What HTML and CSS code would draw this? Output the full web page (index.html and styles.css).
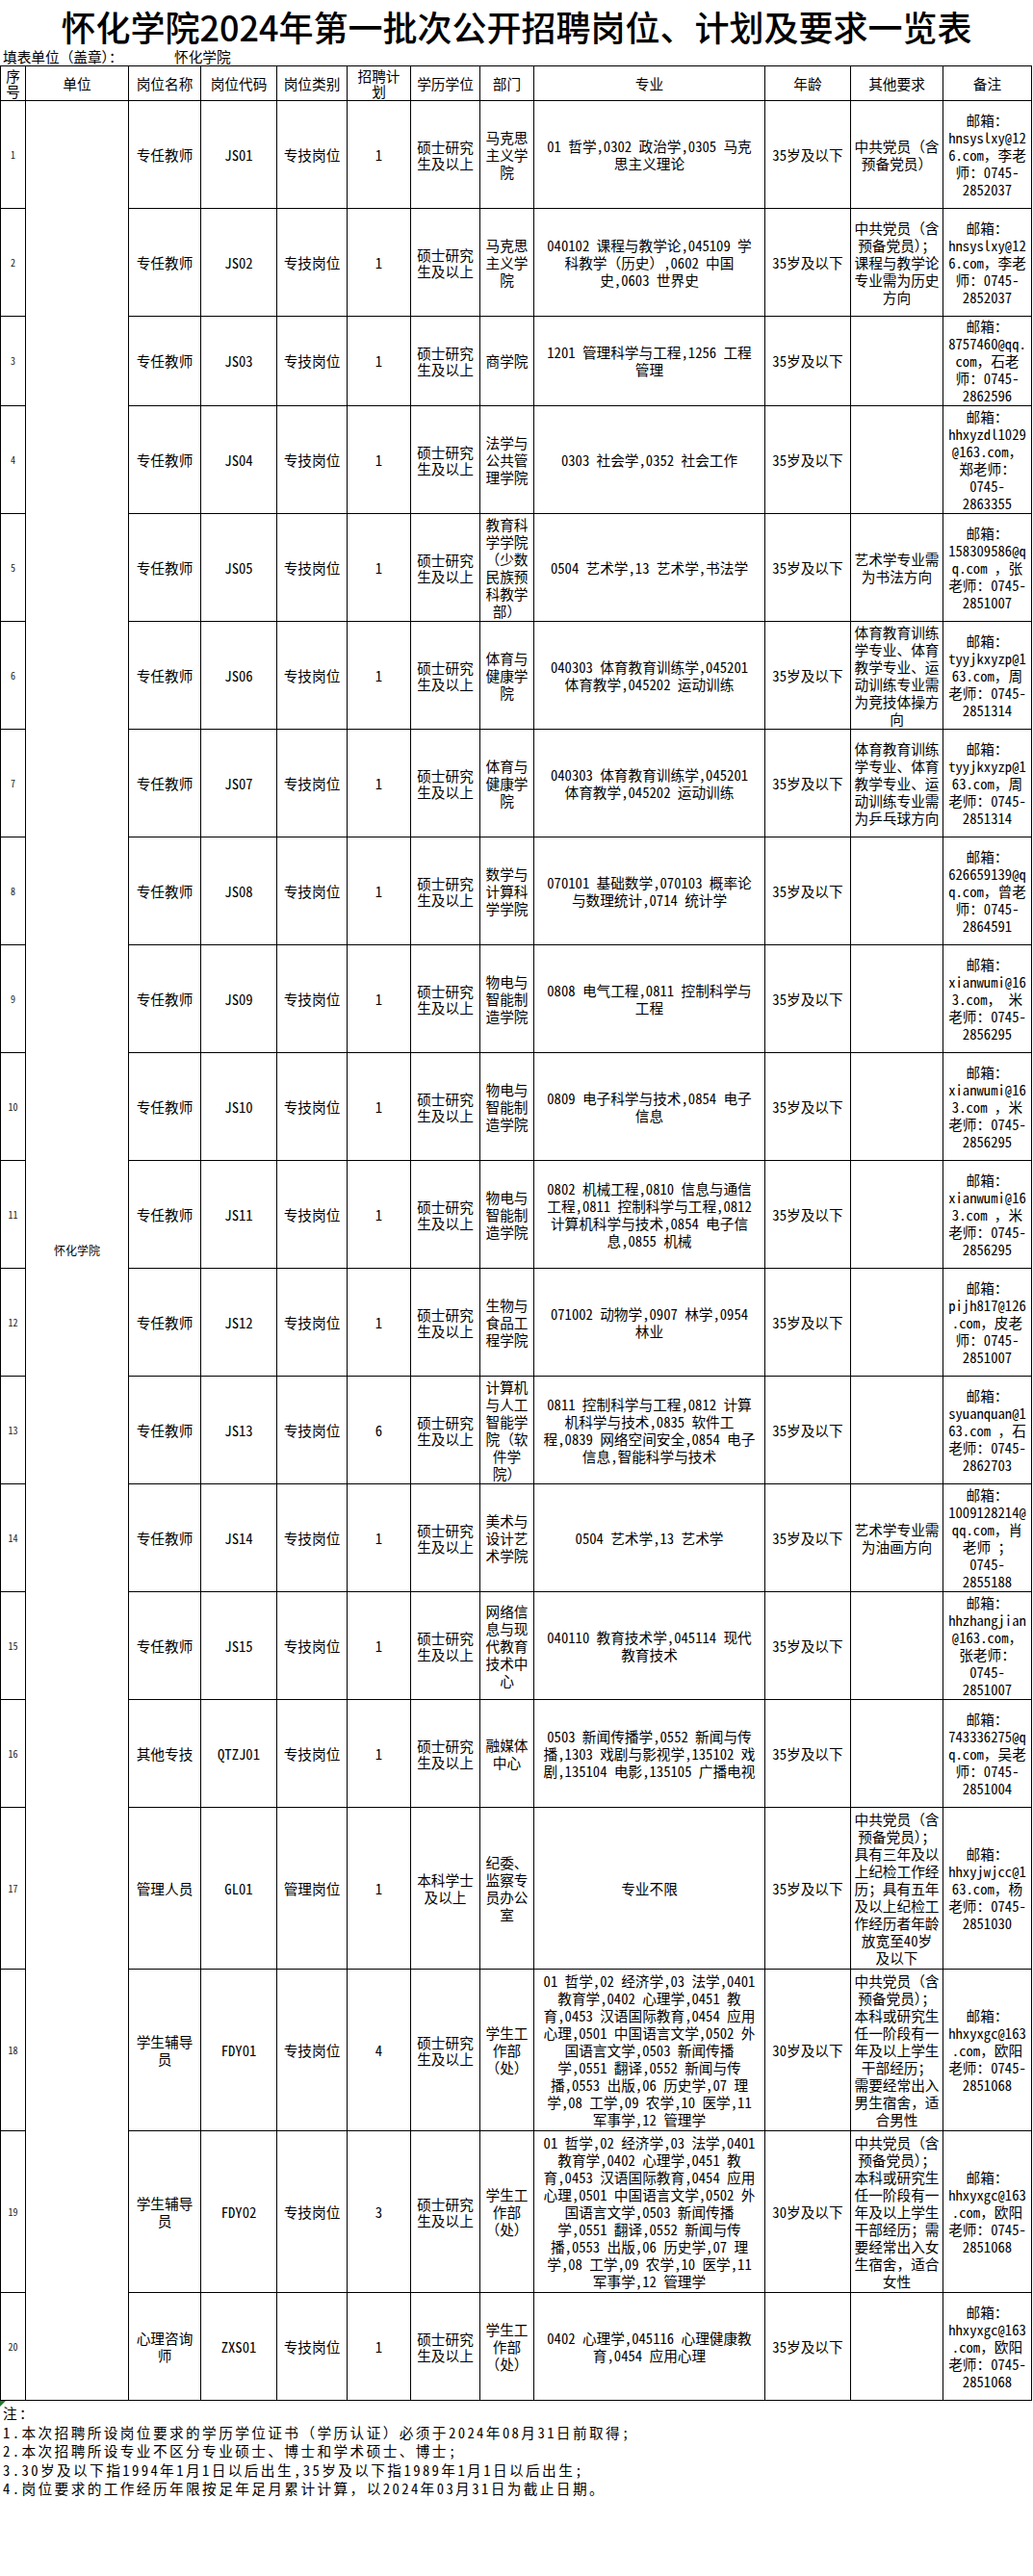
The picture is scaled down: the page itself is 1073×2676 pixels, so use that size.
FILE: index.html
```html
<!DOCTYPE html>
<html lang="zh-CN">
<head>
<meta charset="utf-8">
<title>怀化学院2024年第一批次公开招聘岗位、计划及要求一览表</title>
<link rel="stylesheet" href="styles.css">
</head>
<body>
<div class="page">
<h1 class="title">怀化学院2024年第一批次公开招聘岗位、计划及要求一览表</h1>
<div class="info"><span class="info-label">填表单位（盖章）：</span><span>怀化学院</span></div>
<div class="sheet" role="table">
<div class="cell head th2"><span>序<br>号</span></div><div class="cell head"><span>单位</span></div><div class="cell head"><span>岗位名称</span></div><div class="cell head"><span>岗位代码</span></div><div class="cell head"><span>岗位类别</span></div><div class="cell head th2"><span>招聘计<br>划</span></div><div class="cell head"><span>学历学位</span></div><div class="cell head"><span>部门</span></div><div class="cell head"><span>专业</span></div><div class="cell head"><span>年龄</span></div><div class="cell head"><span>其他要求</span></div><div class="cell head"><span>备注</span></div>

<div class="cell n"><span>1</span></div><div class="cell unit"><span>怀化学院</span></div><div class="cell"><span>专任教师</span></div><div class="cell"><span>JS01</span></div><div class="cell"><span>专技岗位</span></div><div class="cell"><span>1</span></div><div class="cell edu"><span>硕士研究<br>生及以上</span></div><div class="cell"><span>马克思<br>主义学<br>院</span></div><div class="cell"><span>01 哲学,0302 政治学,0305 马克<br>思主义理论</span></div><div class="cell"><span>35岁及以下</span></div><div class="cell"><span>中共党员（含<br>预备党员）</span></div><div class="cell"><span>邮箱：<br>hnsyslxy@12<br>6.com，李老<br>师：0745-<br>2852037</span></div>

<div class="cell n"><span>2</span></div><div class="cell"><span>专任教师</span></div><div class="cell"><span>JS02</span></div><div class="cell"><span>专技岗位</span></div><div class="cell"><span>1</span></div><div class="cell edu"><span>硕士研究<br>生及以上</span></div><div class="cell"><span>马克思<br>主义学<br>院</span></div><div class="cell"><span>040102 课程与教学论,045109 学<br>科教学（历史）,0602 中国<br>史,0603 世界史</span></div><div class="cell"><span>35岁及以下</span></div><div class="cell"><span>中共党员（含<br>预备党员）；<br>课程与教学论<br>专业需为历史<br>方向</span></div><div class="cell"><span>邮箱：<br>hnsyslxy@12<br>6.com，李老<br>师：0745-<br>2852037</span></div>

<div class="cell n"><span>3</span></div><div class="cell"><span>专任教师</span></div><div class="cell"><span>JS03</span></div><div class="cell"><span>专技岗位</span></div><div class="cell"><span>1</span></div><div class="cell edu"><span>硕士研究<br>生及以上</span></div><div class="cell"><span>商学院</span></div><div class="cell"><span>1201 管理科学与工程,1256 工程<br>管理</span></div><div class="cell"><span>35岁及以下</span></div><div class="cell"></div><div class="cell"><span>邮箱：<br>8757460@qq.<br>com，石老<br>师：0745-<br>2862596</span></div>

<div class="cell n"><span>4</span></div><div class="cell"><span>专任教师</span></div><div class="cell"><span>JS04</span></div><div class="cell"><span>专技岗位</span></div><div class="cell"><span>1</span></div><div class="cell edu"><span>硕士研究<br>生及以上</span></div><div class="cell"><span>法学与<br>公共管<br>理学院</span></div><div class="cell"><span>0303 社会学,0352 社会工作</span></div><div class="cell"><span>35岁及以下</span></div><div class="cell"></div><div class="cell"><span>邮箱：<br>hhxyzdl1029<br>@163.com，<br>郑老师：<br>0745-<br>2863355</span></div>

<div class="cell n"><span>5</span></div><div class="cell"><span>专任教师</span></div><div class="cell"><span>JS05</span></div><div class="cell"><span>专技岗位</span></div><div class="cell"><span>1</span></div><div class="cell edu"><span>硕士研究<br>生及以上</span></div><div class="cell"><span>教育科<br>学学院<br>（少数<br>民族预<br>科教学<br>部）</span></div><div class="cell"><span>0504 艺术学,13 艺术学,书法学</span></div><div class="cell"><span>35岁及以下</span></div><div class="cell"><span>艺术学专业需<br>为书法方向</span></div><div class="cell"><span>邮箱：<br>158309586@q<br>q.com ，张<br>老师：0745-<br>2851007</span></div>

<div class="cell n"><span>6</span></div><div class="cell"><span>专任教师</span></div><div class="cell"><span>JS06</span></div><div class="cell"><span>专技岗位</span></div><div class="cell"><span>1</span></div><div class="cell edu"><span>硕士研究<br>生及以上</span></div><div class="cell"><span>体育与<br>健康学<br>院</span></div><div class="cell"><span>040303 体育教育训练学,045201<br>体育教学,045202 运动训练</span></div><div class="cell"><span>35岁及以下</span></div><div class="cell"><span>体育教育训练<br>学专业、体育<br>教学专业、运<br>动训练专业需<br>为竞技体操方<br>向</span></div><div class="cell"><span>邮箱：<br>tyyjkxyzp@1<br>63.com，周<br>老师：0745-<br>2851314</span></div>

<div class="cell n"><span>7</span></div><div class="cell"><span>专任教师</span></div><div class="cell"><span>JS07</span></div><div class="cell"><span>专技岗位</span></div><div class="cell"><span>1</span></div><div class="cell edu"><span>硕士研究<br>生及以上</span></div><div class="cell"><span>体育与<br>健康学<br>院</span></div><div class="cell"><span>040303 体育教育训练学,045201<br>体育教学,045202 运动训练</span></div><div class="cell"><span>35岁及以下</span></div><div class="cell"><span>体育教育训练<br>学专业、体育<br>教学专业、运<br>动训练专业需<br>为乒乓球方向</span></div><div class="cell"><span>邮箱：<br>tyyjkxyzp@1<br>63.com，周<br>老师：0745-<br>2851314</span></div>

<div class="cell n"><span>8</span></div><div class="cell"><span>专任教师</span></div><div class="cell"><span>JS08</span></div><div class="cell"><span>专技岗位</span></div><div class="cell"><span>1</span></div><div class="cell edu"><span>硕士研究<br>生及以上</span></div><div class="cell"><span>数学与<br>计算科<br>学学院</span></div><div class="cell"><span>070101 基础数学,070103 概率论<br>与数理统计,0714 统计学</span></div><div class="cell"><span>35岁及以下</span></div><div class="cell"></div><div class="cell"><span>邮箱：<br>626659139@q<br>q.com，曾老<br>师：0745-<br>2864591</span></div>

<div class="cell n"><span>9</span></div><div class="cell"><span>专任教师</span></div><div class="cell"><span>JS09</span></div><div class="cell"><span>专技岗位</span></div><div class="cell"><span>1</span></div><div class="cell edu"><span>硕士研究<br>生及以上</span></div><div class="cell"><span>物电与<br>智能制<br>造学院</span></div><div class="cell"><span>0808 电气工程,0811 控制科学与<br>工程</span></div><div class="cell"><span>35岁及以下</span></div><div class="cell"></div><div class="cell"><span>邮箱：<br>xianwumi@16<br>3.com， 米<br>老师：0745-<br>2856295</span></div>

<div class="cell n"><span>10</span></div><div class="cell"><span>专任教师</span></div><div class="cell"><span>JS10</span></div><div class="cell"><span>专技岗位</span></div><div class="cell"><span>1</span></div><div class="cell edu"><span>硕士研究<br>生及以上</span></div><div class="cell"><span>物电与<br>智能制<br>造学院</span></div><div class="cell"><span>0809 电子科学与技术,0854 电子<br>信息</span></div><div class="cell"><span>35岁及以下</span></div><div class="cell"></div><div class="cell"><span>邮箱：<br>xianwumi@16<br>3.com ，米<br>老师：0745-<br>2856295</span></div>

<div class="cell n"><span>11</span></div><div class="cell"><span>专任教师</span></div><div class="cell"><span>JS11</span></div><div class="cell"><span>专技岗位</span></div><div class="cell"><span>1</span></div><div class="cell edu"><span>硕士研究<br>生及以上</span></div><div class="cell"><span>物电与<br>智能制<br>造学院</span></div><div class="cell"><span>0802 机械工程,0810 信息与通信<br>工程,0811 控制科学与工程,0812<br>计算机科学与技术,0854 电子信<br>息,0855 机械</span></div><div class="cell"><span>35岁及以下</span></div><div class="cell"></div><div class="cell"><span>邮箱：<br>xianwumi@16<br>3.com ，米<br>老师：0745-<br>2856295</span></div>

<div class="cell n"><span>12</span></div><div class="cell"><span>专任教师</span></div><div class="cell"><span>JS12</span></div><div class="cell"><span>专技岗位</span></div><div class="cell"><span>1</span></div><div class="cell edu"><span>硕士研究<br>生及以上</span></div><div class="cell"><span>生物与<br>食品工<br>程学院</span></div><div class="cell"><span>071002 动物学,0907 林学,0954<br>林业</span></div><div class="cell"><span>35岁及以下</span></div><div class="cell"></div><div class="cell"><span>邮箱：<br>pijh817@126<br>.com，皮老<br>师：0745-<br>2851007</span></div>

<div class="cell n"><span>13</span></div><div class="cell"><span>专任教师</span></div><div class="cell"><span>JS13</span></div><div class="cell"><span>专技岗位</span></div><div class="cell"><span>6</span></div><div class="cell edu"><span>硕士研究<br>生及以上</span></div><div class="cell"><span>计算机<br>与人工<br>智能学<br>院（软<br>件学<br>院）</span></div><div class="cell"><span>0811 控制科学与工程,0812 计算<br>机科学与技术,0835 软件工<br>程,0839 网络空间安全,0854 电子<br>信息,智能科学与技术</span></div><div class="cell"><span>35岁及以下</span></div><div class="cell"></div><div class="cell"><span>邮箱：<br>syuanquan@1<br>63.com ，石<br>老师：0745-<br>2862703</span></div>

<div class="cell n"><span>14</span></div><div class="cell"><span>专任教师</span></div><div class="cell"><span>JS14</span></div><div class="cell"><span>专技岗位</span></div><div class="cell"><span>1</span></div><div class="cell edu"><span>硕士研究<br>生及以上</span></div><div class="cell"><span>美术与<br>设计艺<br>术学院</span></div><div class="cell"><span>0504 艺术学,13 艺术学</span></div><div class="cell"><span>35岁及以下</span></div><div class="cell"><span>艺术学专业需<br>为油画方向</span></div><div class="cell"><span>邮箱：<br>1009128214@<br>qq.com，肖<br>老师 ；<br>0745-<br>2855188</span></div>

<div class="cell n"><span>15</span></div><div class="cell"><span>专任教师</span></div><div class="cell"><span>JS15</span></div><div class="cell"><span>专技岗位</span></div><div class="cell"><span>1</span></div><div class="cell edu"><span>硕士研究<br>生及以上</span></div><div class="cell"><span>网络信<br>息与现<br>代教育<br>技术中<br>心</span></div><div class="cell"><span>040110 教育技术学,045114 现代<br>教育技术</span></div><div class="cell"><span>35岁及以下</span></div><div class="cell"></div><div class="cell"><span>邮箱：<br>hhzhangjian<br>@163.com，<br>张老师：<br>0745-<br>2851007</span></div>

<div class="cell n"><span>16</span></div><div class="cell"><span>其他专技</span></div><div class="cell"><span>QTZJ01</span></div><div class="cell"><span>专技岗位</span></div><div class="cell"><span>1</span></div><div class="cell edu"><span>硕士研究<br>生及以上</span></div><div class="cell"><span>融媒体<br>中心</span></div><div class="cell"><span>0503 新闻传播学,0552 新闻与传<br>播,1303 戏剧与影视学,135102 戏<br>剧,135104 电影,135105 广播电视</span></div><div class="cell"><span>35岁及以下</span></div><div class="cell"></div><div class="cell"><span>邮箱：<br>743336275@q<br>q.com，吴老<br>师：0745-<br>2851004</span></div>

<div class="cell n"><span>17</span></div><div class="cell"><span>管理人员</span></div><div class="cell"><span>GL01</span></div><div class="cell"><span>管理岗位</span></div><div class="cell"><span>1</span></div><div class="cell"><span>本科学士<br>及以上</span></div><div class="cell"><span>纪委、<br>监察专<br>员办公<br>室</span></div><div class="cell"><span>专业不限</span></div><div class="cell"><span>35岁及以下</span></div><div class="cell"><span>中共党员（含<br>预备党员）；<br>具有三年及以<br>上纪检工作经<br>历；具有五年<br>及以上纪检工<br>作经历者年龄<br>放宽至40岁<br>及以下</span></div><div class="cell"><span>邮箱：<br>hhxyjwjcc@1<br>63.com，杨<br>老师：0745-<br>2851030</span></div>

<div class="cell n"><span>18</span></div><div class="cell"><span>学生辅导<br>员</span></div><div class="cell"><span>FDY01</span></div><div class="cell"><span>专技岗位</span></div><div class="cell"><span>4</span></div><div class="cell edu"><span>硕士研究<br>生及以上</span></div><div class="cell"><span>学生工<br>作部<br>（处）</span></div><div class="cell"><span>01 哲学,02 经济学,03 法学,0401<br>教育学,0402 心理学,0451 教<br>育,0453 汉语国际教育,0454 应用<br>心理,0501 中国语言文学,0502 外<br>国语言文学,0503 新闻传播<br>学,0551 翻译,0552 新闻与传<br>播,0553 出版,06 历史学,07 理<br>学,08 工学,09 农学,10 医学,11<br>军事学,12 管理学</span></div><div class="cell"><span>30岁及以下</span></div><div class="cell"><span>中共党员（含<br>预备党员）；<br>本科或研究生<br>任一阶段有一<br>年及以上学生<br>干部经历；<br>需要经常出入<br>男生宿舍，适<br>合男性</span></div><div class="cell"><span>邮箱：<br>hhxyxgc@163<br>.com，欧阳<br>老师：0745-<br>2851068</span></div>

<div class="cell n"><span>19</span></div><div class="cell"><span>学生辅导<br>员</span></div><div class="cell"><span>FDY02</span></div><div class="cell"><span>专技岗位</span></div><div class="cell"><span>3</span></div><div class="cell edu"><span>硕士研究<br>生及以上</span></div><div class="cell"><span>学生工<br>作部<br>（处）</span></div><div class="cell"><span>01 哲学,02 经济学,03 法学,0401<br>教育学,0402 心理学,0451 教<br>育,0453 汉语国际教育,0454 应用<br>心理,0501 中国语言文学,0502 外<br>国语言文学,0503 新闻传播<br>学,0551 翻译,0552 新闻与传<br>播,0553 出版,06 历史学,07 理<br>学,08 工学,09 农学,10 医学,11<br>军事学,12 管理学</span></div><div class="cell"><span>30岁及以下</span></div><div class="cell"><span>中共党员（含<br>预备党员）；<br>本科或研究生<br>任一阶段有一<br>年及以上学生<br>干部经历；需<br>要经常出入女<br>生宿舍，适合<br>女性</span></div><div class="cell"><span>邮箱：<br>hhxyxgc@163<br>.com，欧阳<br>老师：0745-<br>2851068</span></div>

<div class="cell n"><span>20</span></div><div class="cell"><span>心理咨询<br>师</span></div><div class="cell"><span>ZXS01</span></div><div class="cell"><span>专技岗位</span></div><div class="cell"><span>1</span></div><div class="cell edu"><span>硕士研究<br>生及以上</span></div><div class="cell"><span>学生工<br>作部<br>（处）</span></div><div class="cell"><span>0402 心理学,045116 心理健康教<br>育,0454 应用心理</span></div><div class="cell"><span>35岁及以下</span></div><div class="cell"></div><div class="cell"><span>邮箱：<br>hhxyxgc@163<br>.com，欧阳<br>老师：0745-<br>2851068</span></div>
</div>
<div class="notes">
<p>注：</p>
<p>1.本次招聘所设岗位要求的学历学位证书（学历认证）必须于2024年08月31日前取得;</p>
<p>2.本次招聘所设专业不区分专业硕士、博士和学术硕士、博士;</p>
<p>3.30岁及以下指1994年1月1日以后出生,35岁及以下指1989年1月1日以后出生;</p>
<p>4.岗位要求的工作经历年限按足年足月累计计算，以2024年03月31日为截止日期。</p>
</div>
</div>
</body>
</html>
```

FILE: styles.css
```css
* {
  box-sizing: border-box;
}

html, body {
  margin: 0;
  padding: 0;
  background: #ffffff;
}

body {
  color: #000000;
  font-family: "Noto Sans Mono CJK SC", "Noto Sans CJK SC", sans-serif;
  font-size: 14.67px;
}

.page {
  width: 1073px;
}

.title {
  margin: 0;
  height: 50px;
  padding-top: 5px;
  line-height: 45px;
  text-align: center;
  font-family: "Noto Sans CJK SC", sans-serif;
  font-size: 36px;
  font-weight: 500;
}

.info {
  display: flex;
  height: 18px;
  line-height: 18px;
  padding-left: 3px;
  font-size: 14.67px;
}

.info-label {
  width: 178px;
}

.sheet {
  display: grid;
  width: 1072px;
  grid-template-columns: 26px 107px 75px 79px 73px 66px 72px 56px 240px 89px 96px 92px;
  grid-template-rows: 36px repeat(2, 112px) 93px repeat(13, 112px) repeat(3, 168px) 112px;
  border-top: 1px solid #000000;
  border-left: 1px solid #000000;
}

.cell {
  display: flex;
  align-items: center;
  justify-content: center;
  text-align: center;
  white-space: nowrap;
  overflow: hidden;
  line-height: 18px;
  border-right: 1px solid #000000;
  border-bottom: 1px solid #000000;
}

.th2 {
  line-height: 16px;
}

.n {
  font-size: 10px;
  color: #222222;
}

.unit {
  grid-row: span 20;
  font-size: 12px;
}

.edu {
  line-height: 17px;
}

.notes {
  position: relative;
  padding-top: 3px;
  padding-left: 3px;
}

.notes::before {
  content: "";
  position: absolute;
  left: 0;
  top: 0;
  border-top: 6px solid #1e7a2e;
  border-right: 6px solid transparent;
}

.notes p {
  margin: 0;
  line-height: 19.6px;
  letter-spacing: 2.4px;
  white-space: nowrap;
}
```
